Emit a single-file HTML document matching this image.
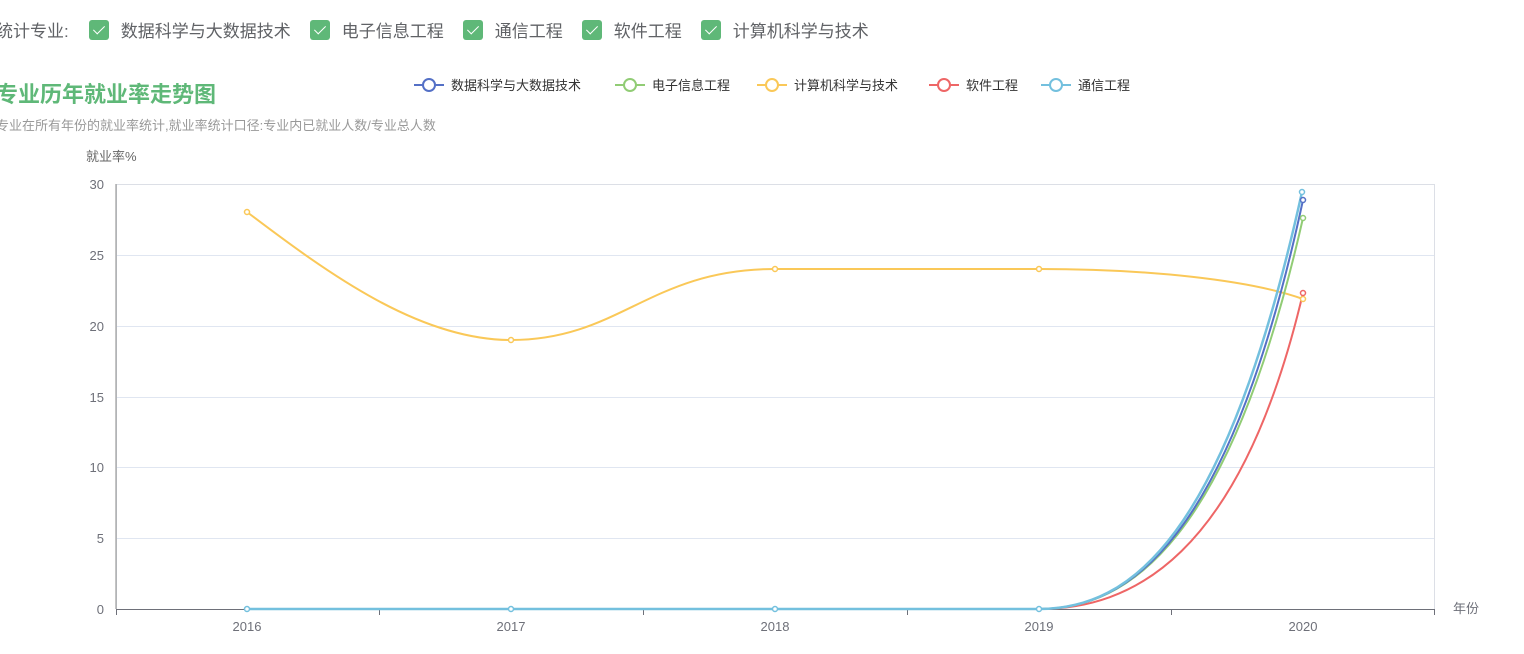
<!DOCTYPE html>
<html><head><meta charset="utf-8"><style>
body{margin:0;width:1524px;height:654px;background:#fff;overflow:hidden;font-family:"Liberation Sans","Noto Sans CJK SC",sans-serif;position:relative}
.top{position:absolute;top:17px;left:-4px;font-size:17px;color:#606266;white-space:nowrap;display:flex;align-items:center}
.cb{display:inline-block;width:20px;height:20px;background:#5fb878;border-radius:3px;margin:0 12px 0 0;position:relative;vertical-align:middle}
.cb:after{content:"";position:absolute;left:7px;top:3px;width:5px;height:10px;border:solid #fff;border-width:0 1.5px 1.5px 0;transform:rotate(45deg)}
.item{margin-right:19px;display:flex;align-items:center}
</style></head><body>
<div class="top"><span style="margin-right:20px">统计专业:</span>
<span class="item"><i class="cb"></i>数据科学与大数据技术</span>
<span class="item"><i class="cb"></i>电子信息工程</span>
<span class="item"><i class="cb"></i>通信工程</span>
<span class="item"><i class="cb"></i>软件工程</span>
<span class="item"><i class="cb"></i>计算机科学与技术</span></div>
<svg width="1524" height="654" style="position:absolute;left:0;top:0" font-family="Liberation Sans, Noto Sans CJK SC, sans-serif">
<text x="-4" y="102" font-size="22" font-weight="bold" fill="#5fb878">专业历年就业率走势图</text>
<text x="-4" y="130" font-size="13" fill="#999">专业在所有年份的就业率统计,就业率统计口径:专业内已就业人数/专业总人数</text>
<text x="86" y="161" font-size="13" fill="#666">就业率%</text>
<g font-size="13" fill="#333">
<line x1="414" y1="85" x2="444" y2="85" stroke="#5470c6" stroke-width="2"/><circle cx="429" cy="85" r="6" fill="#fff" stroke="#5470c6" stroke-width="2"/><text x="451" y="90">数据科学与大数据技术</text>
<line x1="615" y1="85" x2="645" y2="85" stroke="#91cc75" stroke-width="2"/><circle cx="630" cy="85" r="6" fill="#fff" stroke="#91cc75" stroke-width="2"/><text x="652" y="90">电子信息工程</text>
<line x1="757" y1="85" x2="787" y2="85" stroke="#fac858" stroke-width="2"/><circle cx="772" cy="85" r="6" fill="#fff" stroke="#fac858" stroke-width="2"/><text x="794" y="90">计算机科学与技术</text>
<line x1="929" y1="85" x2="959" y2="85" stroke="#ee6666" stroke-width="2"/><circle cx="944" cy="85" r="6" fill="#fff" stroke="#ee6666" stroke-width="2"/><text x="966" y="90">软件工程</text>
<line x1="1041" y1="85" x2="1071" y2="85" stroke="#73c0de" stroke-width="2"/><circle cx="1056" cy="85" r="6" fill="#fff" stroke="#73c0de" stroke-width="2"/><text x="1078" y="90">通信工程</text>
</g>
<g stroke="#e0e6f1" stroke-width="1">
<line x1="116" y1="255.5" x2="1435" y2="255.5"/><line x1="116" y1="326.5" x2="1435" y2="326.5"/><line x1="116" y1="397.5" x2="1435" y2="397.5"/><line x1="116" y1="467.5" x2="1435" y2="467.5"/><line x1="116" y1="538.5" x2="1435" y2="538.5"/>
</g>
<rect x="116.5" y="184.5" width="1318" height="425" fill="none" stroke="#dcdfe6"/>
<line x1="116" y1="184" x2="116" y2="609" stroke="#888"/>
<line x1="116" y1="609.5" x2="1435" y2="609.5" stroke="#6e7079"/>
<g stroke="#6e7079"><line x1="116.5" y1="609" x2="116.5" y2="615"/><line x1="379.5" y1="609" x2="379.5" y2="615"/><line x1="643.5" y1="609" x2="643.5" y2="615"/><line x1="907.5" y1="609" x2="907.5" y2="615"/><line x1="1171.5" y1="609" x2="1171.5" y2="615"/><line x1="1434.5" y1="609" x2="1434.5" y2="615"/></g>
<g font-size="13" fill="#6e7079" text-anchor="end">
<text x="104" y="189">30</text><text x="104" y="260">25</text><text x="104" y="331">20</text><text x="104" y="402">15</text><text x="104" y="472">10</text><text x="104" y="543">5</text><text x="104" y="614">0</text></g>
<g font-size="13" fill="#6e7079" text-anchor="middle">
<text x="247" y="631">2016</text><text x="511" y="631">2017</text><text x="775" y="631">2018</text><text x="1039" y="631">2019</text><text x="1303" y="631">2020</text></g>
<text x="1453" y="613" font-size="13" fill="#6e7079">年份</text>
<g fill="none" stroke-width="2">
<path d="M247,212 C330,275 420,340 511,340 C620,340 650,269 775,269 L1039,269 C1150,269 1250,280 1303,299" stroke="#fac858"/>
<path d="M247,609 L1039,609 C1130,609 1240,560 1303,293" stroke="#ee6666"/>
<path d="M247,609 L1039,609 C1130,609 1230,540 1303,218" stroke="#91cc75"/>
<path d="M247,609 L1039,609 C1130,609 1230,540 1303,200" stroke="#5470c6"/>
<path d="M247,609 L1039,609 C1130,609 1225,540 1302,192" stroke="#73c0de" stroke-width="2.5"/>
</g>
<g fill="#fff" stroke-width="1.5">
<circle cx="247" cy="212" r="2.5" stroke="#fac858"/><circle cx="511" cy="340" r="2.5" stroke="#fac858"/><circle cx="775" cy="269" r="2.5" stroke="#fac858"/><circle cx="1039" cy="269" r="2.5" stroke="#fac858"/><circle cx="1303" cy="299" r="2.5" stroke="#fac858"/>
<circle cx="1303" cy="293" r="2.5" stroke="#ee6666"/><circle cx="1303" cy="218" r="2.5" stroke="#91cc75"/><circle cx="1303" cy="200" r="2.5" stroke="#5470c6"/><circle cx="1302" cy="192" r="2.5" stroke="#73c0de"/>
<circle cx="247" cy="609" r="2.5" stroke="#73c0de"/><circle cx="511" cy="609" r="2.5" stroke="#73c0de"/><circle cx="775" cy="609" r="2.5" stroke="#73c0de"/><circle cx="1039" cy="609" r="2.5" stroke="#73c0de"/>
</g>
</svg>
</body></html>
